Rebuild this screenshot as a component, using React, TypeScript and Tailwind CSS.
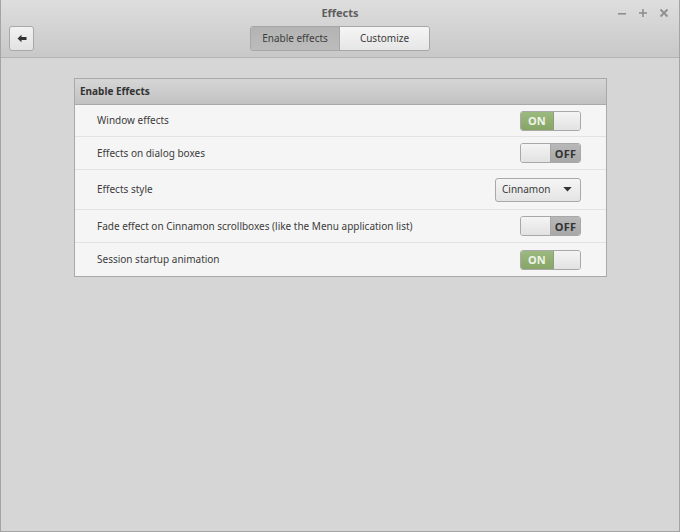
import React from "react";

function Toggle({ on }: { on: boolean }) {
  return (
    <div className="flex h-[20px] w-[61px] overflow-hidden rounded-[3px] border border-[#a8a8a8] text-[11px] font-bold leading-none">
      {on ? (
        <>
          <div className="flex w-[33px] items-center justify-center bg-[linear-gradient(#9cb97f,#86a566)] text-[#eef4e8] tracking-wide border-r border-[#8a9f73]">ON</div>
          <div className="flex-1 bg-[linear-gradient(#f4f4f4,#e2e2e2)]" />
        </>
      ) : (
        <>
          <div className="w-[30px] bg-[linear-gradient(#f4f4f4,#e2e2e2)] border-r border-[#a8a8a8]" />
          <div className="flex flex-1 items-center justify-center bg-[linear-gradient(#b8b8b8,#a8a8a8)] text-[#333] tracking-wide">OFF</div>
        </>
      )}
    </div>
  );
}

function Row({ label, children, h }: { label: string; children: React.ReactNode; h: string }) {
  return (
    <div className={`flex items-center justify-between pl-[22px] pr-[25px] ${h}`}>
      <span>{label}</span>
      {children}
    </div>
  );
}

export default function App() {
  return (
    <div
      className="flex h-[532px] w-[680px] flex-col border-x border-b border-[#a4a4a4] bg-[#d6d6d6] text-[10px] text-[#3c3c3c]"
      style={{ fontFamily: '"Noto Sans", "Open Sans", sans-serif' }}
    >
      <div className="relative flex h-[58px] flex-col border-b border-[#b4b4b4] bg-[linear-gradient(#dedede,#c8c8c8)]">
        <div className="flex h-[26px] items-center justify-center pt-[1px] text-[11px] font-bold text-[#5e5e5e]">Effects</div>
        <div className="absolute right-[10px] top-[8px] flex items-center gap-[11px]">
          <svg width="10" height="10" viewBox="0 0 10 10"><rect x="1" y="5" width="8" height="1.6" fill="#8f8f8f" /></svg>
          <svg width="10" height="10" viewBox="0 0 10 10"><rect x="1" y="4.2" width="8" height="1.6" fill="#8f8f8f" /><rect x="4.2" y="1" width="1.6" height="8" fill="#8f8f8f" /></svg>
          <svg width="10" height="10" viewBox="0 0 10 10"><path d="M1.5 1.5 L8.5 8.5 M8.5 1.5 L1.5 8.5" stroke="#8f8f8f" strokeWidth="1.8" /></svg>
        </div>
        <div className="relative flex h-[25px] items-center">
          <button className="absolute left-[8px] top-0 flex h-[25px] w-[25px] items-center justify-center rounded-[3px] border border-[#a9a9a9] bg-[linear-gradient(#f2f2f2,#e2e2e2)]">
            <svg width="10" height="9" viewBox="0 0 10 9"><path d="M0.5 4.5 L4.5 0.8 L4.5 3 L9.5 3 L9.5 6 L4.5 6 L4.5 8.2 Z" fill="#333" /></svg>
          </button>
          <div className="mx-auto flex h-[25px] overflow-hidden rounded-[3px] border border-[#a6a6a6] text-[10px] text-[#3c3c3c]">
            <div className="flex w-[89px] items-center justify-center border-r border-[#a6a6a6] bg-[linear-gradient(#b3b3b3,#bcbcbc)]">Enable effects</div>
            <div className="flex w-[89px] items-center justify-center bg-[linear-gradient(#f5f5f5,#e6e6e6)]">Customize</div>
          </div>
        </div>
      </div>
      <div className="pl-[73px] pt-[20px]">
        <div className="w-[533px] border border-[#a9a9a9] bg-[#f5f5f5]">
          <div className="flex h-[25px] items-center bg-[linear-gradient(#d6d6d6,#c2c2c2)] pl-[5px] font-bold text-[#333]">Enable Effects</div>
          <div className="divide-y divide-[#e2e2e2] border-t border-[#a9a9a9]">
            <Row label="Window effects" h="h-[32px]"><Toggle on /></Row>
            <Row label="Effects on dialog boxes" h="h-[33px]"><Toggle on={false} /></Row>
            <Row label="Effects style" h="h-[40px]">
              <div className="flex h-[24px] w-[86px] items-center justify-between rounded-[3px] border border-[#a9a9a9] bg-[linear-gradient(#f5f5f5,#e4e4e4)] pl-[6px] pr-[8px] text-[#3c3c3c]">
                <span>Cinnamon</span>
                <svg width="9" height="5" viewBox="0 0 10 6"><path d="M0 0 L10 0 L5 5.5 Z" fill="#333" /></svg>
              </div>
            </Row>
            <Row label="Fade effect on Cinnamon scrollboxes (like the Menu application list)" h="h-[33px]"><Toggle on={false} /></Row>
            <Row label="Session startup animation" h="h-[33px]"><Toggle on /></Row>
          </div>
        </div>
      </div>
    </div>
  );
}
